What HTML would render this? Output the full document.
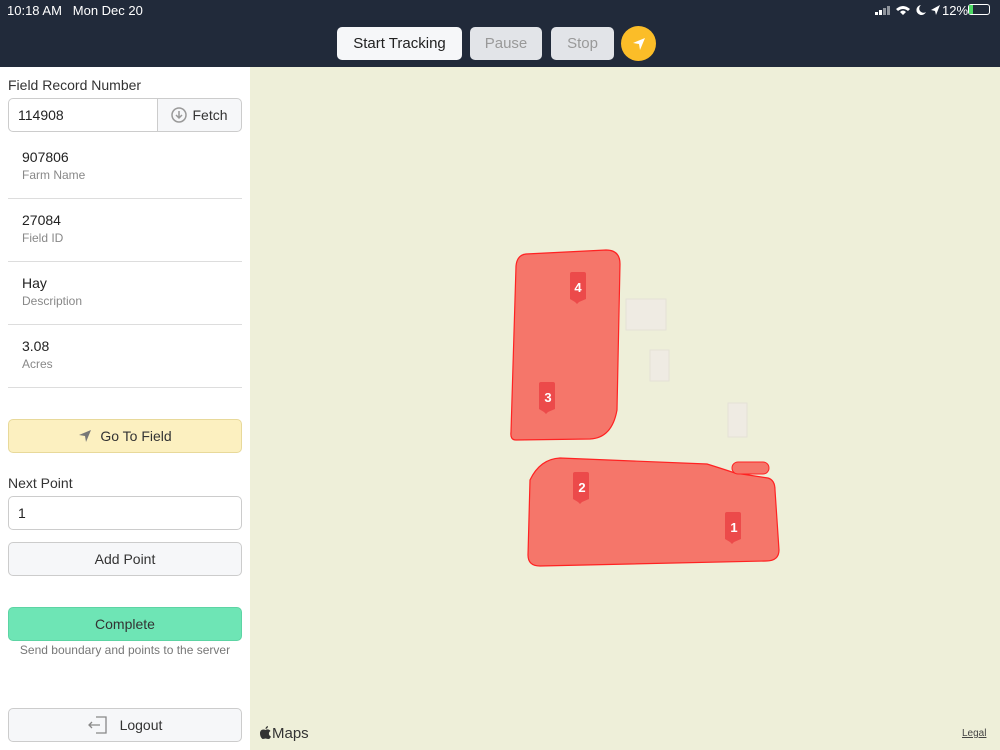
<!DOCTYPE html>
<html><head><style>
*{box-sizing:border-box;margin:0;padding:0}
body{width:1000px;height:750px;overflow:hidden;font-family:"Liberation Sans",sans-serif;background:#fff;position:relative}
.top{position:absolute;left:0;top:0;width:1000px;height:67px;background:#212a3a;color:#fff}
.btn{position:absolute;top:27px;height:33px;border-radius:5px;font-size:15px;display:flex;align-items:center;justify-content:center}
.side{position:absolute;left:0;top:67px;width:250px;height:683px;background:#fff}
.map{position:absolute;left:250px;top:67px;width:750px;height:683px;background:#eeefd9}
.lbl{position:absolute;left:8px;font-size:14px;color:#333}
.item{position:absolute;left:8px;width:234px;height:63px;border-bottom:1px solid #ddd;padding:13px 0 0 14px}
.item .v{font-size:14px;color:#222}
.item .s{font-size:12px;color:#888;margin-top:3px}
.box{position:absolute;left:8px;width:234px;height:34px;border:1px solid #ccc;border-radius:5px;font-size:14px;display:flex;align-items:center;justify-content:center;color:#333}
</style></head><body>
<div class="top">
<div style="position:absolute;left:7px;top:3px;font-size:13px">10:18 AM&nbsp;&nbsp;&nbsp;Mon Dec 20</div>
<svg style="position:absolute;left:874px;top:4px" width="70" height="12" viewBox="0 0 70 12" fill="#fff">
<rect x="1" y="8" width="3" height="3"/><rect x="5" y="6" width="3" height="5"/><rect x="9" y="4" width="3" height="7" opacity=".5"/><rect x="13" y="2" width="3" height="9" opacity=".5"/>
<path d="M22 5 Q29 -1 36 5 L34 7 Q29 3 24 7Z M26 8 Q29 5 32 8 L29 11Z"/>
<path d="M47 1 A5 5 0 1 0 52 8 A4 4 0 0 1 47 1Z"/>
<path d="M66 1 L57 6 L61 7 L62 11Z"/>
</svg>
<div style="position:absolute;left:942px;top:3px;font-size:13px">12%</div>
<div style="position:absolute;left:968px;top:4px;width:22px;height:11px;border:1px solid #fff;border-radius:3px"><div style="width:4px;height:100%;background:#4cd964"></div></div>
<div class="btn" style="left:337px;width:125px;background:#f6f7f9;color:#222">Start Tracking</div>
<div class="btn" style="left:470px;width:72px;background:#e2e4e8;color:#999">Pause</div>
<div class="btn" style="left:551px;width:63px;background:#e2e4e8;color:#999">Stop</div>
<div style="position:absolute;left:621px;top:26px;width:35px;height:35px;border-radius:50%;background:#fbbd28;display:flex;align-items:center;justify-content:center"><svg width="14" height="14" viewBox="0 0 14 14"><path d="M13 1 L1 6 L7 7 L8 13 Z" fill="#fff"/></svg></div>
</div>
<div class="side">
<div class="lbl" style="top:10px">Field Record Number</div>
<div style="position:absolute;left:8px;top:31px;width:150px;height:34px;border:1px solid #ccc;border-radius:5px 0 0 5px;font-size:14px;padding:8px 9px;color:#222">114908</div>
<div style="position:absolute;left:157px;top:31px;width:85px;height:34px;border:1px solid #ccc;border-radius:0 5px 5px 0;background:#f6f7f9;font-size:14px;display:flex;align-items:center;justify-content:center;color:#333"><svg width="16" height="16" viewBox="0 0 16 16" style="margin-right:5px"><circle cx="8" cy="8" r="7" fill="none" stroke="#999" stroke-width="1.5"/><path d="M8 4v7M5 8l3 3 3-3" stroke="#999" stroke-width="1.5" fill="none"/></svg>Fetch</div>
<div class="item" style="top:69px"><div class="v">907806</div><div class="s">Farm Name</div></div>
<div class="item" style="top:132px"><div class="v">27084</div><div class="s">Field ID</div></div>
<div class="item" style="top:195px"><div class="v">Hay</div><div class="s">Description</div></div>
<div class="item" style="top:258px"><div class="v">3.08</div><div class="s">Acres</div></div>
<div class="box" style="top:352px;background:#fcf0c0;border-color:#e8d99a"><svg width="14" height="14" viewBox="0 0 14 14" style="margin-right:8px"><path d="M13 1 L1 6 L7 7 L8 13 Z" fill="#777"/></svg>Go To Field</div>
<div class="lbl" style="top:408px">Next Point</div>
<div class="box" style="top:429px;justify-content:flex-start;padding-left:9px;color:#222">1</div>
<div class="box" style="top:475px;background:#f6f7f9">Add Point</div>
<div class="box" style="top:540px;background:#6ee5b5;border-color:#5dd4a4">Complete</div>
<div style="position:absolute;left:0;width:250px;top:576px;text-align:center;font-size:12px;color:#777">Send boundary and points to the server</div>
<div class="box" style="top:641px;background:#f6f7f9"><svg width="20" height="18" viewBox="0 0 20 18" style="margin-right:12px"><path d="M8 1h10v16H8M1 9h11M4 6l-3 3 3 3" stroke="#888" stroke-width="1.3" fill="none"/></svg>Logout</div>
</div>
<div class="map">
<svg width="750" height="683" viewBox="250 67 750 683" style="position:absolute;left:0;top:0">
<rect x="626" y="299" width="40" height="31" fill="#efebe3" stroke="#e4e2d6"/>
<rect x="650" y="350" width="19" height="31" fill="#efebe3" stroke="#e4e2d6"/>
<rect x="728" y="403" width="19" height="34" fill="#efebe3" stroke="#e4e2d6"/>
<path d="M526 254 L606 250 Q620 250 620 264 L617 410 Q612 438 590 439 L516 440 Q510 440 511 432 L516 266 Q517 255 526 254Z" fill="#f5766a" stroke="#f22" stroke-width="1.2"/>
<path d="M560 458 L707 464 Q720 468 735 473 L768 478 Q775 480 775 490 L779 550 Q779 561 766 561 L540 566 Q528 566 528 555 L530 480 Q540 459 560 458Z" fill="#f5766a" stroke="#f22" stroke-width="1.2"/>
<rect x="732" y="462" width="37" height="12" rx="6" fill="#f5766a" stroke="#f22"/>
<g font-family="Liberation Sans" font-weight="bold" font-size="13" fill="#fff" text-anchor="middle">
<path d="M573 272h11a2 2 0 0 1 2 2v25l-7 3l-2 2l-2-2l-5-3v-25a2 2 0 0 1 2-2z" fill="#ec4a4a"/><text x="578" y="292">4</text>
<path d="M542 382h11a2 2 0 0 1 2 2v25l-7 3l-2 2l-2-2l-5-3v-25a2 2 0 0 1 2-2z" fill="#ec4a4a"/><text x="548" y="402">3</text>
<path d="M576 472h11a2 2 0 0 1 2 2v25l-7 3l-2 2l-2-2l-5-3v-25a2 2 0 0 1 2-2z" fill="#ec4a4a"/><text x="582" y="492">2</text>
<path d="M728 512h11a2 2 0 0 1 2 2v25l-7 3l-2 2l-2-2l-5-3v-25a2 2 0 0 1 2-2z" fill="#ec4a4a"/><text x="734" y="532">1</text>
</g>
</svg>
<svg style="position:absolute;left:10px;top:659px" width="11" height="13" viewBox="0 0 11 13"><path d="M8 0 Q8 2.5 5.5 3 Q5.5 0.5 8 0Z M5.5 4 Q7 3 8.5 3.5 Q10 4 10.5 5 Q8.5 6 9 8.5 Q9.5 10 11 10.5 Q10 13 8.5 13 Q7.5 13 5.5 12.5 Q3.5 13 2.5 13 Q0 11 0 7.5 Q0 3.5 3.5 3.5 Q4.5 3.5 5.5 4Z" fill="#333"/></svg>
<div style="position:absolute;left:22px;top:658px;font-size:15px;color:#333">Maps</div>
<div style="position:absolute;left:712px;top:661px;font-size:10px;color:#444;text-decoration:underline">Legal</div>
</div>
</body></html>
